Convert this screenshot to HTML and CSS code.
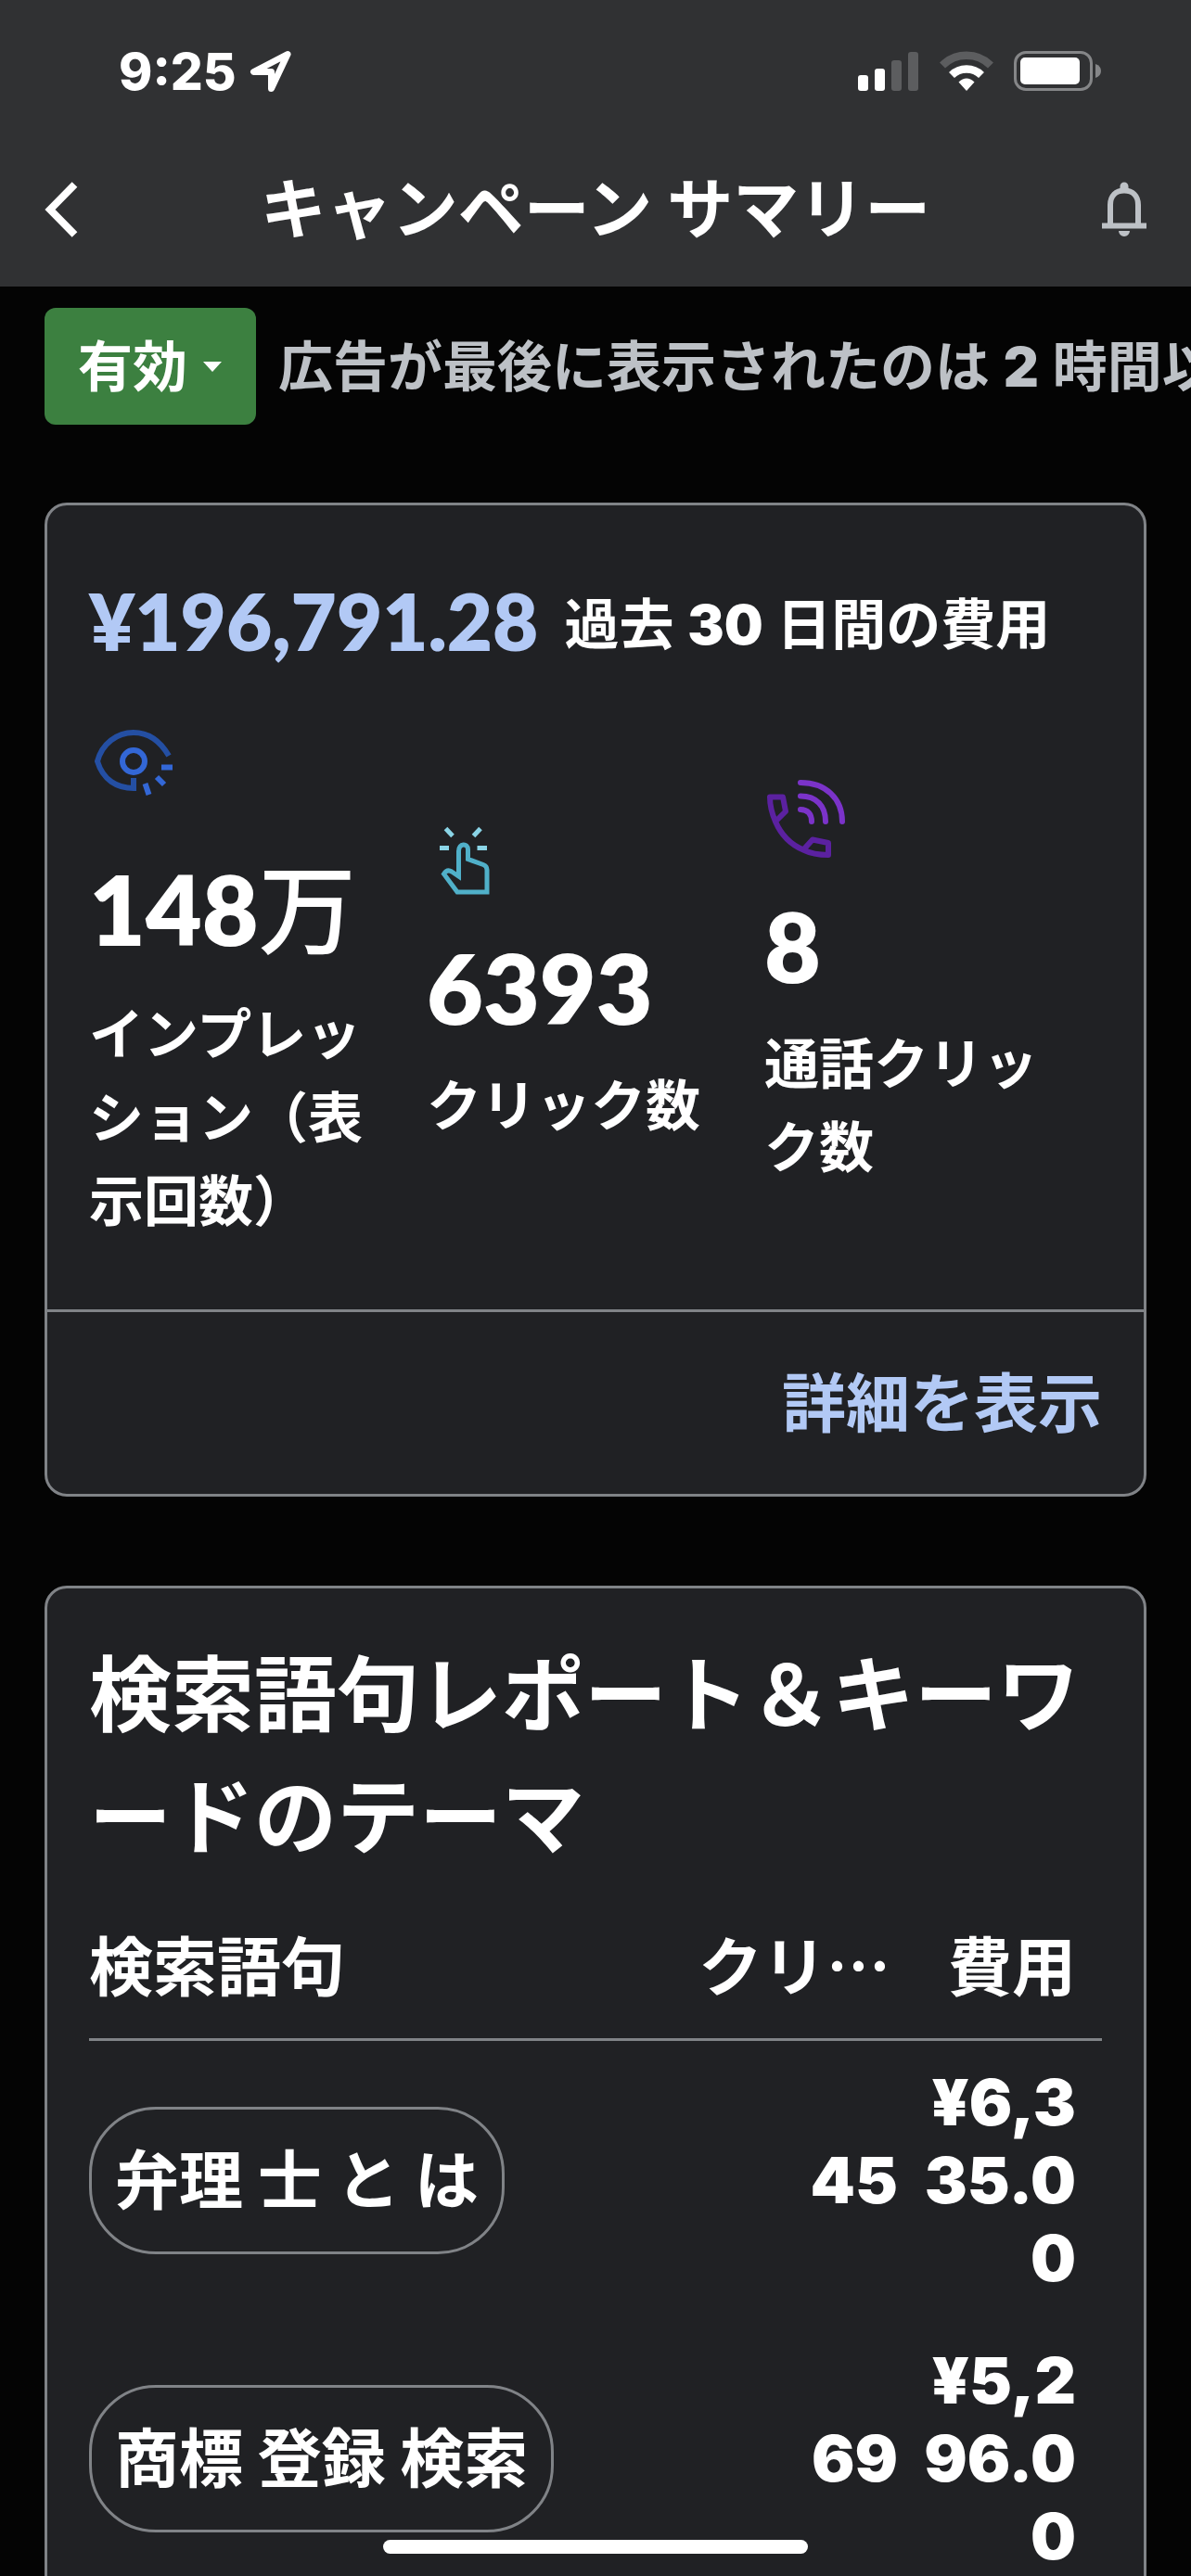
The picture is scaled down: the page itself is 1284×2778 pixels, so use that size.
FILE: index.html
```html
<!DOCTYPE html>
<html lang="ja">
<head>
    <meta charset="UTF-8">
    <meta name="viewport" content="width=device-width, initial-scale=1.0">
    <title>キャンペーン サマリー</title>
    <link rel="stylesheet" href="styles.css">
</head>
<body>
    <header class="header">
        <div class="status-bar">
            <div class="clock">
                <span>9:25</span>
                <svg width="46" height="46" viewBox="0 0 46 46" fill="none" stroke="#fff" stroke-width="7" stroke-linejoin="round">
                    <path d="M41 4.500L4.500 23.500H23.500V41.500Z"/>
                </svg>
            </div>
            <div class="indicators">
                <svg width="66" height="44" viewBox="0 0 66 44" fill="#fff">
                    <rect x="0" y="26" width="11" height="17" rx="3"/>
                    <rect x="18" y="19" width="11" height="24" rx="3"/>
                    <rect x="36" y="10" width="11" height="33" rx="3" fill="#5c5d5f"/>
                    <rect x="54" y="1" width="11" height="42" rx="3" fill="#5c5d5f"/>
                </svg>
                <svg width="58" height="44" viewBox="0 0 58 44" fill="none">
                    <path d="M3 15.500A37 37 0 0 1 55 15.500" stroke="#5c5d5f" stroke-width="8.500"/>
                    <path d="M13 26A23 23 0 0 1 45 26" stroke="#fff" stroke-width="8.500"/>
                    <path d="M20.500 33.500Q29 25.500 37.500 33.500L29 43Z" fill="#fff"/>
                </svg>
                <svg width="94" height="44" viewBox="0 0 94 44">
                    <rect x="1.500" y="1.500" width="82" height="40" rx="11.500" fill="none" stroke="#858688" stroke-width="3"/>
                    <rect x="7" y="7" width="64" height="29" rx="5" fill="#fff"/>
                    <path d="M88 14Q94 16 94 21.500T88 29Z" fill="#858688"/>
                </svg>
            </div>
        </div>
        <nav class="nav">
            <button class="icon-btn" aria-label="戻る">
                <svg width="36" height="60" viewBox="0 0 36 60" fill="none" stroke="#fff" stroke-width="8">
                    <path d="M32.500 3L6 30L32.500 57"/>
                </svg>
            </button>
            <h1 class="title">キャンペーン サマリー</h1>
            <button class="icon-btn" aria-label="通知">
                <svg width="48" height="60" viewBox="0 0 48 60" fill="none" stroke="#bdc1c6" stroke-width="6">
                    <path d="M9 46V25C9 15 15 9.500 24 9.500S39 15 39 25V46"/>
                    <path d="M0 47.500H48"/>
                    <path d="M19.500 10V5A4.500 4.500 0 0 1 28.500 5V10ZM18 53H30A6 6 0 0 1 18 53Z" fill="#bdc1c6" stroke="none"/>
                </svg>
            </button>
        </nav>
    </header>

    <main class="content">
        <div class="campaign-status">
            <button class="status-btn">
                <span class="status-name">有効</span>
                <svg width="20" height="11" viewBox="0 0 20 11" fill="#fff"><path d="M0 0H20L10 11Z"/></svg>
            </button>
            <p class="status-text">広告が最後に表示されたのは<span class="num"> 2 </span>時間以内です</p>
        </div>

        <section class="card">
            <div class="summary">
                <div class="cost">
                    <span class="cost-value">¥196,791.28</span>
                    <span class="cost-label">過去<span class="num"> 30 </span>日間の費用</span>
                </div>
                <div class="stats">
                    <div class="stat">
                        <!-- 表示回数 -->
                        <svg class="stat-icon" viewBox="0 0 96 96" fill="none" stroke-width="6">
                            <path d="M86 37C76 20 64 12 48 12C30 12 14 24 9 43C15 63 30 72 48 72V61" stroke="#244fa3"/>
                            <circle cx="48" cy="43" r="12" stroke="#3367d6"/>
                            <path d="M78 49.500H90M73 60L81 68M60.500 67L64.500 79" stroke="#3367d6"/>
                        </svg>
                        <div class="stat-value">148<span class="unit">万</span></div>
                        <div class="stat-label">インプレッション（表示回数）</div>
                    </div>
                    <div class="stat">
                        <!-- クリック -->
                        <svg class="stat-icon" viewBox="0 0 96 96" fill="none" stroke-width="5">
                            <path d="M14 33.500H24M54.500 33.500H65M20.500 12.500L28 20.500M58 12.500L50.500 20.500" stroke="#8ad4e6"/>
                            <path d="M34.500 64V37C34.500 28 44.500 28 44.500 35V45.500L61 51.500Q65 53 65 57V81H33L18.500 61.500Q22 56 27 59L34.500 64Z" stroke="#50b0c9"/>
                        </svg>
                        <div class="stat-value">6393</div>
                        <div class="stat-label">クリック数</div>
                    </div>
                    <div class="stat">
                        <!-- 通話 -->
                        <svg class="stat-icon" viewBox="0 0 96 96" fill="none" stroke-width="6" stroke-linecap="round" stroke-linejoin="round">
                            <path d="M6 23.500H20L23 39L12 50C8 41 6 32 6 23.500ZM12 50C18 64 29 75 42 80.500L52 69.500L69 73V86C58 86 49 84 42 80.500" stroke="#5b21a0"/>
                            <path d="M39 8C66 8 84 25 84 50M39 22.500C56 22.500 66 33 66 50M39 37C47 37 51 42 51 50" stroke="#7b33c9"/>
                        </svg>
                        <div class="stat-value">8</div>
                        <div class="stat-label">通話クリック数</div>
                    </div>
                </div>
            </div>
            <div class="card-footer">
                <a href="#" class="details-link">詳細を表示</a>
            </div>
        </section>

        <section class="card">
            <div class="report">
                <h2 class="report-title">検索語句レポート＆キーワードのテーマ</h2>
                <table class="terms">
                    <thead>
                        <tr>
                            <th class="col-term">検索語句</th>
                            <th class="col-clicks">クリ…</th>
                            <th class="col-cost">費用</th>
                        </tr>
                    </thead>
                    <tbody>
                        <tr>
                            <td><button class="chip">弁理 士 と は</button></td>
                            <td class="col-clicks">45</td>
                            <td class="col-cost">¥6,335.00</td>
                        </tr>
                        <tr>
                            <td><button class="chip">商標 登録 検索</button></td>
                            <td class="col-clicks">69</td>
                            <td class="col-cost">¥5,296.00</td>
                        </tr>
                    </tbody>
                </table>
            </div>
        </section>
    </main>

    <div class="home-indicator"></div>
</body>
</html>
```
FILE: styles.css
```css
* {
    box-sizing: border-box;
}
body {
    display: flex;
    flex-direction: column;
    height: 100vh;
    margin: 0;
    overflow: hidden;
    background-color: #040404;
    color: #fff;
    font-family: "Noto Sans CJK JP", sans-serif;
    font-size: 59px;
    font-weight: 700;
}
h1, h2, p {
    margin: 0;
}
button {
    border: none;
    background: none;
    color: inherit;
    font: inherit;
    padding: 0;
    cursor: pointer;
}
svg {
    display: block;
    flex-shrink: 0;
}
.num {
    margin: 0 3px;
    font-family: Inter, sans-serif;
    font-weight: 900;
}

/* ヘッダー */
.header {
    flex-shrink: 0;
    background-color: #303133;
}
.status-bar {
    display: flex;
    align-items: center;
    justify-content: space-between;
    height: 154px;
    padding: 0 97px 0 128px;
}
.clock {
    display: flex;
    align-items: center;
    gap: 14px;
    font-family: Inter, sans-serif;
    font-size: 55px;
    font-weight: 800;
}
.indicators {
    display: flex;
    align-items: center;
    gap: 22px;
}
.nav {
    display: flex;
    align-items: center;
    justify-content: space-between;
    height: 155px;
    padding: 0 48px 12px;
}
.icon-btn {
    width: 48px;
}
.title {
    padding-bottom: 12px;
    font-size: 71px;
    line-height: 96px;
}

/* コンテンツ */
.content {
    flex: 1;
    min-height: 0;
    padding: 23px 48px 0;
    overflow: hidden auto;
    scrollbar-width: none;
}
.campaign-status {
    display: flex;
    align-items: center;
    gap: 24px;
    margin-bottom: 84px;
    white-space: nowrap;
}
.status-btn {
    display: flex;
    align-items: center;
    gap: 17px;
    height: 126px;
    padding: 0 37px 0 36px;
    border-radius: 12px;
    background-color: #3c8040;
}
.status-name,
.status-text {
    padding-bottom: 8px;
}
.status-text {
    color: #bdc1c6;
}
.card {
    margin-bottom: 96px;
    border: 3px solid #808387;
    border-radius: 24px;
    background-color: #202124;
}
.summary {
    padding: 73px 45px 75px;
}
.cost {
    display: flex;
    align-items: center;
    gap: 28px;
    margin-bottom: 58px;
    white-space: nowrap;
}
.cost-value {
    color: #b2c9f5;
    font-family: Lato, sans-serif;
    font-size: 85px;
    font-weight: 800;
}
.stats {
    display: flex;
    align-items: center;
}
.stat {
    flex: 1;
    padding-right: 36px;
}
.stat-icon {
    width: 96px;
    height: 96px;
    margin-bottom: 24px;
}
.stat-value {
    margin-bottom: 17px;
    font-family: Lato, "Noto Sans CJK JP", sans-serif;
    font-size: 105px;
    font-weight: 800;
}
.unit {
    font-weight: 500;
}
.stat-label {
    line-height: 90px;
}
.card-footer {
    display: flex;
    justify-content: flex-end;
    padding: 46px 45px 54px;
    border-top: 3px solid #808387;
}
.details-link {
    color: #b2c9f5;
    font-size: 69px;
    line-height: 96px;
    text-decoration: none;
}

/* 検索語句レポート */
.report {
    padding: 43px 45px;
}
.report-title {
    font-size: 89px;
    line-height: 132px;
}
.terms {
    width: 100%;
    table-layout: fixed;
    border-collapse: collapse;
    font-size: 69px;
    line-height: 84px;
}
.terms th {
    padding: 55px 0 39px;
    border-bottom: 3px solid #808387;
    text-align: left;
}
.terms td {
    padding: 24px 0;
    vertical-align: middle;
}
.terms .col-clicks {
    width: 220px;
    padding-right: 4px;
    text-align: right;
}
.terms th.col-clicks {
    padding-right: 12px;
    white-space: nowrap;
}
.terms .col-cost {
    width: 216px;
    padding-right: 28px;
    text-align: right;
    word-break: break-all;
}
.terms td.col-clicks,
.terms td.col-cost {
    font-family: Inter, sans-serif;
    font-weight: 900;
}
.chip {
    display: block;
    height: 159px;
    padding: 0 25px 8px;
    border: 3px solid #808387;
    border-radius: 72px;
    white-space: nowrap;
}

.home-indicator {
    position: fixed;
    bottom: 24px;
    left: 50%;
    width: 458px;
    height: 15px;
    margin-left: -229px;
    border-radius: 8px;
    background-color: #fff;
}
```
